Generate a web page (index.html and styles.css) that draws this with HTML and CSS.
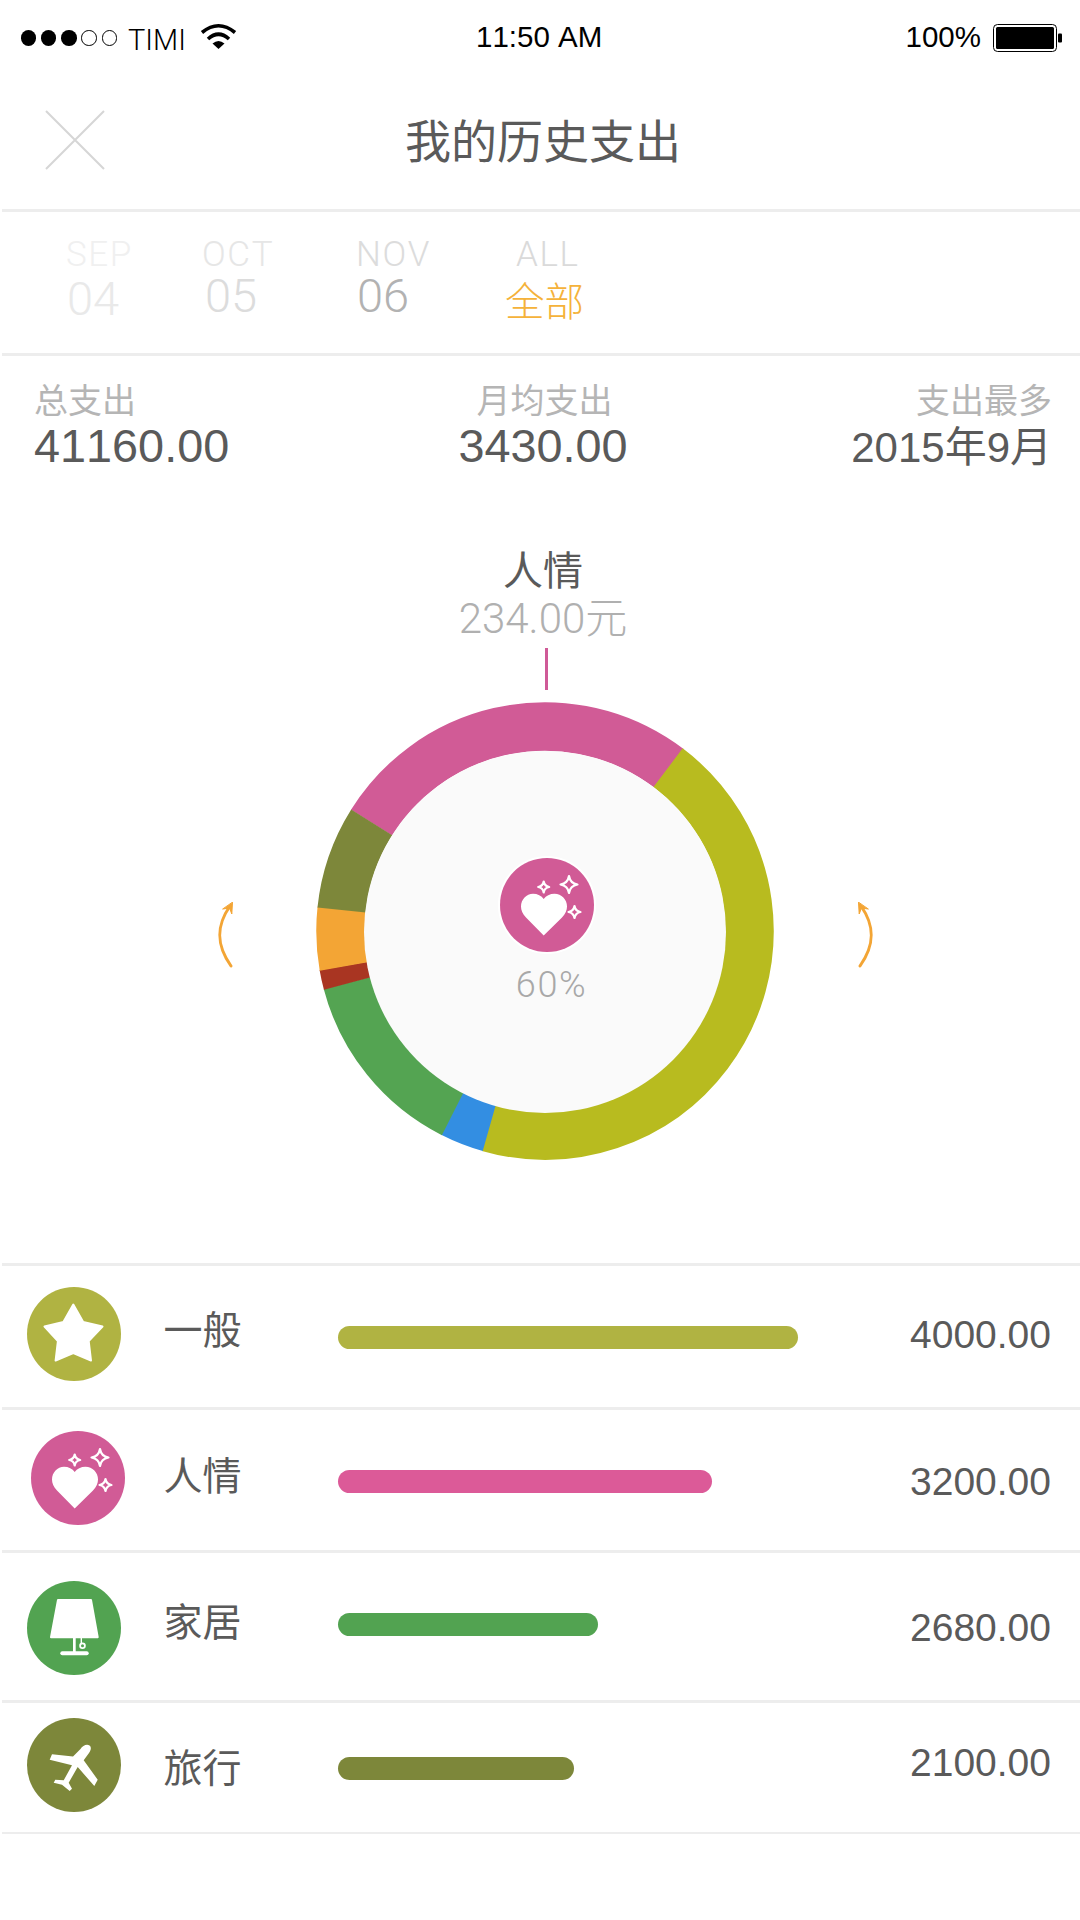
FILE: index.html
```html
<!DOCTYPE html>
<html lang="zh-CN">
<head>
<meta charset="utf-8">
<title>我的历史支出</title>
<link rel="stylesheet" href="styles.css">
</head>
<body>
<svg class="defs" width="0" height="0" aria-hidden="true">
  <symbol id="heart" viewBox="0 0 94 94">
    <path class="solid" d="M43.7 77.5 L26 59.5 C22.5 55.5 21 52.5 21 48.5 C21 41.5 26.5 35.7 33 35.7 C37.5 35.7 41.5 37.7 43.7 41 C46 37.7 50 35.7 54.5 35.7 C61.5 35.7 67 41.5 67 48.5 C67 52.5 65.5 55.5 62 59.5 Z"/>
    <path class="spark" transform="translate(69 26.5)" d="M0 -8.5 Q1.2 -1.2 8.5 0 Q1.2 1.2 0 8.5 Q-1.2 1.2 -8.5 0 Q-1.2 -1.2 0 -8.5Z"/>
    <path class="spark" transform="translate(43.7 29)" d="M0 -5.5 Q.8 -.8 5.5 0 Q.8 .8 0 5.5 Q-.8 .8 -5.5 0 Q-.8 -.8 0 -5.5Z"/>
    <path class="spark" transform="translate(74.5 54)" d="M0 -6 Q.9 -.9 6 0 Q.9 .9 0 6 Q-.9 .9 -6 0 Q-.9 -.9 0 -6Z"/>
  </symbol>
</svg>

<main class="page">
  <header class="status">
    <div class="status-left">
      <span class="dot"></span><span class="dot"></span><span class="dot"></span>
      <span class="dot dot-empty"></span><span class="dot dot-empty"></span>
      <span class="carrier">TIMI</span>
      <svg class="wifi" viewBox="0 0 37 26">
        <path class="wifi-arc" d="M2 9.5 Q18.5 -4 35 9.5"/>
        <path class="wifi-arc" d="M8 16 Q18.5 6.5 29 16"/>
        <path d="M12.5 20.5 Q18.5 15.5 24.5 20.5 L18.5 26 Z"/>
      </svg>
    </div>
    <div class="status-time">11:50 AM</div>
    <div class="status-right">
      <span class="battery-text">100%</span>
      <svg class="battery" viewBox="0 0 70 28">
        <rect class="battery-shell" x="0.5" y="0.5" width="63" height="27" rx="4"/>
        <rect x="3" y="3" width="58" height="22" rx="1.5"/>
        <rect x="65" y="9.5" width="4" height="9" rx="1"/>
      </svg>
    </div>
  </header>

  <nav class="nav rule">
    <svg class="close" viewBox="0 0 60 60"><path d="M1 1 L59 59 M59 1 L1 59"/></svg>
    <h1 class="title">我的历史支出</h1>
  </nav>

  <section class="months rule">
    <div class="month m-sep"><span class="month-name">SEP</span><span class="month-num">04</span></div>
    <div class="month m-oct"><span class="month-name">OCT</span><span class="month-num">05</span></div>
    <div class="month m-nov"><span class="month-name">NOV</span><span class="month-num">06</span></div>
    <div class="month m-all"><span class="month-name">ALL</span><span class="month-num">全部</span></div>
  </section>

  <section class="stats">
    <div class="stat stat-total"><span class="stat-label">总支出</span><span class="stat-value">41160.00</span></div>
    <div class="stat stat-avg"><span class="stat-label">月均支出</span><span class="stat-value">3430.00</span></div>
    <div class="stat stat-max"><span class="stat-label">支出最多</span><span class="stat-value stat-value-small">2015年9月</span></div>
  </section>

  <section class="chart">
    <div class="callout">
      <div class="callout-name">人情</div>
      <div class="callout-value">234.00元</div>
      <div class="callout-tick"></div>
    </div>
    <div class="wheel">
      <svg class="arrow" viewBox="0 0 16 66">
        <path d="M14 64 C-1 43 -1 24 13 4"/>
        <path class="arrow-head" d="M15.5 0.5 L14.8 12 L12.5 6 L6 7 Z"/>
      </svg>
      <div class="donut">
        <svg class="donut-svg" viewBox="0 0 460 460">
          <circle class="seg seg-pink" cx="230" cy="230" r="204.5" pathLength="360" stroke-dasharray="95.3 360" transform="rotate(212 230 230)"/>
          <circle class="seg seg-yellow" cx="230" cy="230" r="204.5" pathLength="360" stroke-dasharray="159 360" transform="rotate(-53 230 230)"/>
          <circle class="seg seg-blue" cx="230" cy="230" r="204.5" pathLength="360" stroke-dasharray="11.2 360" transform="rotate(105.8 230 230)"/>
          <circle class="seg seg-green" cx="230" cy="230" r="204.5" pathLength="360" stroke-dasharray="48.5 360" transform="rotate(116.8 230 230)"/>
          <circle class="seg seg-red" cx="230" cy="230" r="204.5" pathLength="360" stroke-dasharray="5.1 360" transform="rotate(165.1 230 230)"/>
          <circle class="seg seg-orange" cx="230" cy="230" r="204.5" pathLength="360" stroke-dasharray="16.1 360" transform="rotate(170 230 230)"/>
          <circle class="seg seg-olive" cx="230" cy="230" r="204.5" pathLength="360" stroke-dasharray="26.2 360" transform="rotate(185.9 230 230)"/>
          <circle class="donut-hole" cx="230" cy="231" r="181"/>
        </svg>
        <div class="donut-center">
          <div class="badge badge-ring badge-pink"><svg class="glyph" viewBox="0 0 94 94"><use href="#heart"/></svg></div>
          <div class="donut-pct">60%</div>
        </div>
      </div>
      <svg class="arrow arrow-right" viewBox="0 0 16 66">
        <path d="M14 64 C-1 43 -1 24 13 4"/>
        <path class="arrow-head" d="M15.5 0.5 L14.8 12 L12.5 6 L6 7 Z"/>
      </svg>
    </div>
  </section>

  <section class="list">
    <article class="row row-1 rule">
      <div class="badge badge-gold">
        <svg class="glyph" viewBox="0 0 94 94"><path class="solid round" d="M46.3 17.5 L56.2 35 L75.5 39.5 L61.7 54 L64 73.5 L46.3 66 L28.6 73.5 L30.9 54 L17.5 39.5 L36.4 35 Z"/></svg>
      </div>
      <div class="row-label">一般</div>
      <div class="bar bar-gold"></div>
      <div class="row-value">4000.00</div>
    </article>
    <article class="row row-2 rule">
      <div class="badge badge-pink"><svg class="glyph" viewBox="0 0 94 94"><use href="#heart"/></svg></div>
      <div class="row-label">人情</div>
      <div class="bar bar-pink"></div>
      <div class="row-value">3200.00</div>
    </article>
    <article class="row row-3 rule">
      <div class="badge badge-green">
        <svg class="glyph" viewBox="0 0 94 94">
          <path class="solid round" d="M31 19 H64 L70.7 56.3 H24 Z"/>
          <rect class="solid" x="46" y="56" width="2.7" height="15"/>
          <rect class="solid" x="33.3" y="70.3" width="28.4" height="4" rx="2"/>
          <rect class="solid" x="53.6" y="56" width="1.4" height="6"/>
          <circle class="lamp-pull" cx="55.5" cy="64.8" r="2.4"/>
        </svg>
      </div>
      <div class="row-label">家居</div>
      <div class="bar bar-green"></div>
      <div class="row-value">2680.00</div>
    </article>
    <article class="row row-4 rule rule-thin">
      <div class="badge badge-olive">
        <svg class="glyph" viewBox="0 0 94 94">
          <path class="solid" d="M53.5 31 C55.5 27.5 60 25.5 62.5 27.5 C65 29.5 63.5 33 62 35 L56.7 42.3 L70.7 61.7 L67.3 68 L50.7 49 L41.7 64.7 L45 70.7 L42.7 73 L35 66.7 L26.7 64.7 L28.3 61.7 L36.7 62.3 L45 47.3 L22.7 41.7 L25 36.3 L46 38.5 Z"/>
        </svg>
      </div>
      <div class="row-label">旅行</div>
      <div class="bar bar-olive"></div>
      <div class="row-value">2100.00</div>
    </article>
  </section>
</main>
</body>
</html>
```

FILE: styles.css
```css
* { box-sizing: border-box; margin: 0; padding: 0; }

html, body { background: #fff; }

body {
  width: 1080px;
  height: 1920px;
  overflow: hidden;
  font-family: "Liberation Sans", "Noto Sans CJK SC", sans-serif;
  font-kerning: none;
  color: #5a5a5a;
}

.defs { position: absolute; }
.solid { fill: #fff; }
.round { stroke: #fff; stroke-width: 2; stroke-linejoin: round; }
.spark { fill: none; stroke: #fff; stroke-width: 2.2; stroke-linejoin: round; }
.lamp-pull { fill: none; stroke: #fff; stroke-width: 1.8; }

.page { display: flex; flex-direction: column; width: 1080px; }

.rule { border-bottom: 3px solid #ededed; }
.rule-thin { border-bottom-width: 2px; }

/* Status bar */
.status {
  display: grid;
  grid-template-columns: 455.5px auto 1fr;
  align-items: center;
  height: 70px;
  padding-left: 20.5px;
  padding-top: 6px;
  color: #000;
  font-size: 29.5px;
}
.status-left { display: flex; align-items: center; }
.dot {
  width: 15.5px;
  height: 15.5px;
  margin-right: 4.8px;
  border-radius: 50%;
  background: #000;
}
.dot-empty { background: none; border: 1.5px solid #000; }
.carrier { margin-left: 6px; font-size: 29px; font-family: Roboto, "Liberation Sans", sans-serif; font-weight: 300; line-height: 30px; margin-top: 4px; }
.wifi { width: 37px; height: 26px; margin-left: 14px; margin-top: -4px; }
.wifi-arc { fill: none; stroke: #000; stroke-width: 3.6; }
.status-time { line-height: 30px; margin-top: -2px; }
.status-right { display: flex; justify-content: flex-end; align-items: center; padding-right: 17px; }
.battery-text { line-height: 30px; margin-top: -2px; }
.battery { width: 70px; height: 28px; margin-left: 12px; margin-top: -1px; }
.battery-shell { fill: #fff; stroke: #000; stroke-width: 1; }

/* Nav */
.nav {
  display: flex;
  align-items: center;
  height: 142px;
  margin-left: 2px;
  padding-left: 43px;
}
.close { width: 60px; height: 60px; }
.close path { fill: none; stroke: #d6d6d6; stroke-width: 2; }
.title {
  margin-left: 300px;
  margin-top: 4px;
  font-size: 46px;
  font-weight: 400;
  line-height: 60px;
  white-space: nowrap;
}

/* Months */
.months {
  display: flex;
  height: 144px;
  margin-left: 2px;
  padding-left: 64px;
  padding-top: 25px;
}
.month { display: flex; flex-direction: column; align-items: flex-start; }
.month-name { font-family: Roboto, "Liberation Sans", sans-serif; font-weight: 300; font-size: 35px; letter-spacing: 1.6px; line-height: 36px; }
.month-num { font-family: Roboto, "Liberation Sans", sans-serif; font-weight: 300; font-size: 47px; line-height: 44px; margin-top: 1px; }
.m-sep { width: 136px; }
.m-sep .month-name { color: #f0f0f0; }
.m-sep .month-num { color: #e9e9e9; margin-left: 1px; margin-top: 4px; }
.m-oct { width: 154px; }
.m-oct .month-name { color: #e6e6e6; }
.m-oct .month-num { color: #dcdcdc; margin-left: 3px; }
.m-nov { width: 149px; }
.m-nov .month-name { color: #dcdcdc; }
.m-nov .month-num { color: #b2b2b2; margin-left: 1px; }
.m-all .month-name { color: #dadada; margin-left: 11px; }
.m-all .month-num { color: #f5b23a; font-family: "Noto Sans CJK SC", sans-serif; font-size: 39.5px; margin-top: 4px; margin-left: 0; }

/* Totals */
.stats {
  display: grid;
  grid-template-columns: 1fr auto 1fr;
  height: 114px;
  padding: 26px 28px 0 34px;
}
.stat { display: flex; flex-direction: column; align-items: flex-start; }
.stat-avg { align-items: center; }
.stat-avg .stat-label { margin-left: 3px; }
.stat-max { align-items: flex-end; }
.stat-label { font-size: 34px; line-height: 38px; color: #b5b5b5; }
.stat-value { font-size: 46.8px; line-height: 46px; margin-top: 3px; }
.stat-value-small { font-size: 42px; margin-top: 5px; }

/* Chart */
.chart {
  display: flex;
  flex-direction: column;
  align-items: center;
  height: 793px;
  margin-left: 2px;
  padding-top: 79px;
}
.callout { display: flex; flex-direction: column; align-items: center; margin-left: 4px; }
.callout-name { font-size: 40px; line-height: 44px; }
.callout-value { font-size: 42px; line-height: 48px; margin-top: 2px; color: #b0b0b0; font-family: Roboto, "Liberation Sans", "Noto Sans CJK SC", sans-serif; font-weight: 300; }
.callout-tick { width: 3px; height: 42px; margin-top: 5px; margin-left: 7px; background: #cf5a97; }

.wheel {
  display: flex;
  align-items: center;
  width: 1078px;
  margin-top: 10.5px;
  padding-left: 215px;
}
.arrow { width: 16px; height: 66px; margin-top: 9px; }
.arrow path { fill: none; stroke: #f3a535; stroke-width: 3; stroke-linecap: round; }
.arrow .arrow-head { fill: #f3a535; stroke-width: 1; stroke-linejoin: round; }
.arrow-right { margin-left: 83px; transform: scaleX(-1); }

.donut { position: relative; width: 460px; height: 460px; margin-left: 81.5px; }
.donut-svg { display: block; width: 460px; height: 460px; }
.seg { fill: none; stroke-width: 48.5; }
.seg-pink { stroke: #d15b96; }
.seg-yellow { stroke: #b8bb1f; }
.seg-blue { stroke: #338ee2; }
.seg-green { stroke: #54a452; }
.seg-red { stroke: #a93522; }
.seg-orange { stroke: #f3a535; }
.seg-olive { stroke: #7d873a; }
.donut-hole { fill: #fafafa; }

.donut-center {
  position: absolute;
  left: 185px;
  top: 157px;
  display: flex;
  flex-direction: column;
  align-items: center;
  width: 94px;
}
.donut-pct {
  margin-top: 13px;
  margin-left: 10px;
  font-family: Roboto, "Liberation Sans", sans-serif;
  font-weight: 300;
  font-size: 36px;
  letter-spacing: 1.6px;
  line-height: 40px;
  color: #a8a8a8;
  white-space: nowrap;
}

/* Badges */
.badge { flex: none; width: 94px; height: 94px; border-radius: 50%; }
.badge-ring { box-shadow: 0 0 0 2px #fff; }
.badge-gold { background: #b0b342; }
.badge-pink { background: #d15b96; }
.badge-green { background: #52a351; }
.badge-olive { background: #7d873a; }
.glyph { display: block; width: 94px; height: 94px; }

/* Category list */
.list { display: flex; flex-direction: column; margin-left: 2px; border-top: 3px solid #ededed; }
.row {
  display: flex;
  align-items: flex-start;
  height: var(--h);
  padding-left: 25px;
}
.row .badge { margin-top: var(--badge); }
.row-label {
  width: 78px;
  margin-left: 42.5px;
  margin-top: var(--label);
  font-size: 39px;
  line-height: 46px;
  white-space: nowrap;
}
.bar { height: 23px; margin-top: var(--bar); margin-left: 96.5px; border-radius: 12px; }
.bar-gold { width: 460px; background: #b0b342; }
.bar-pink { width: 373.5px; background: #dc5a98; }
.bar-green { width: 259.5px; background: #52a351; }
.bar-olive { width: 236px; background: #7d873a; }
.row-value {
  margin-left: auto;
  margin-right: 29px;
  margin-top: var(--value);
  font-size: 39px;
  line-height: 44px;
}
.row-1 { --h: 144px; --badge: 21px; --label: 42px; --bar: 60px; --value: 47px; }
.row-2 { --h: 143px; --badge: 21px; --label: 44px; --bar: 60px; --value: 50px; padding-left: 29px; }
.row-2 .row-label { margin-left: 38.5px; }
.row-3 { --h: 150px; --badge: 28px; --label: 47px; --bar: 60px; --value: 53px; }
.row-4 { --h: 131px; --badge: 15px; --label: 43px; --bar: 54px; --value: 38px; }
```
